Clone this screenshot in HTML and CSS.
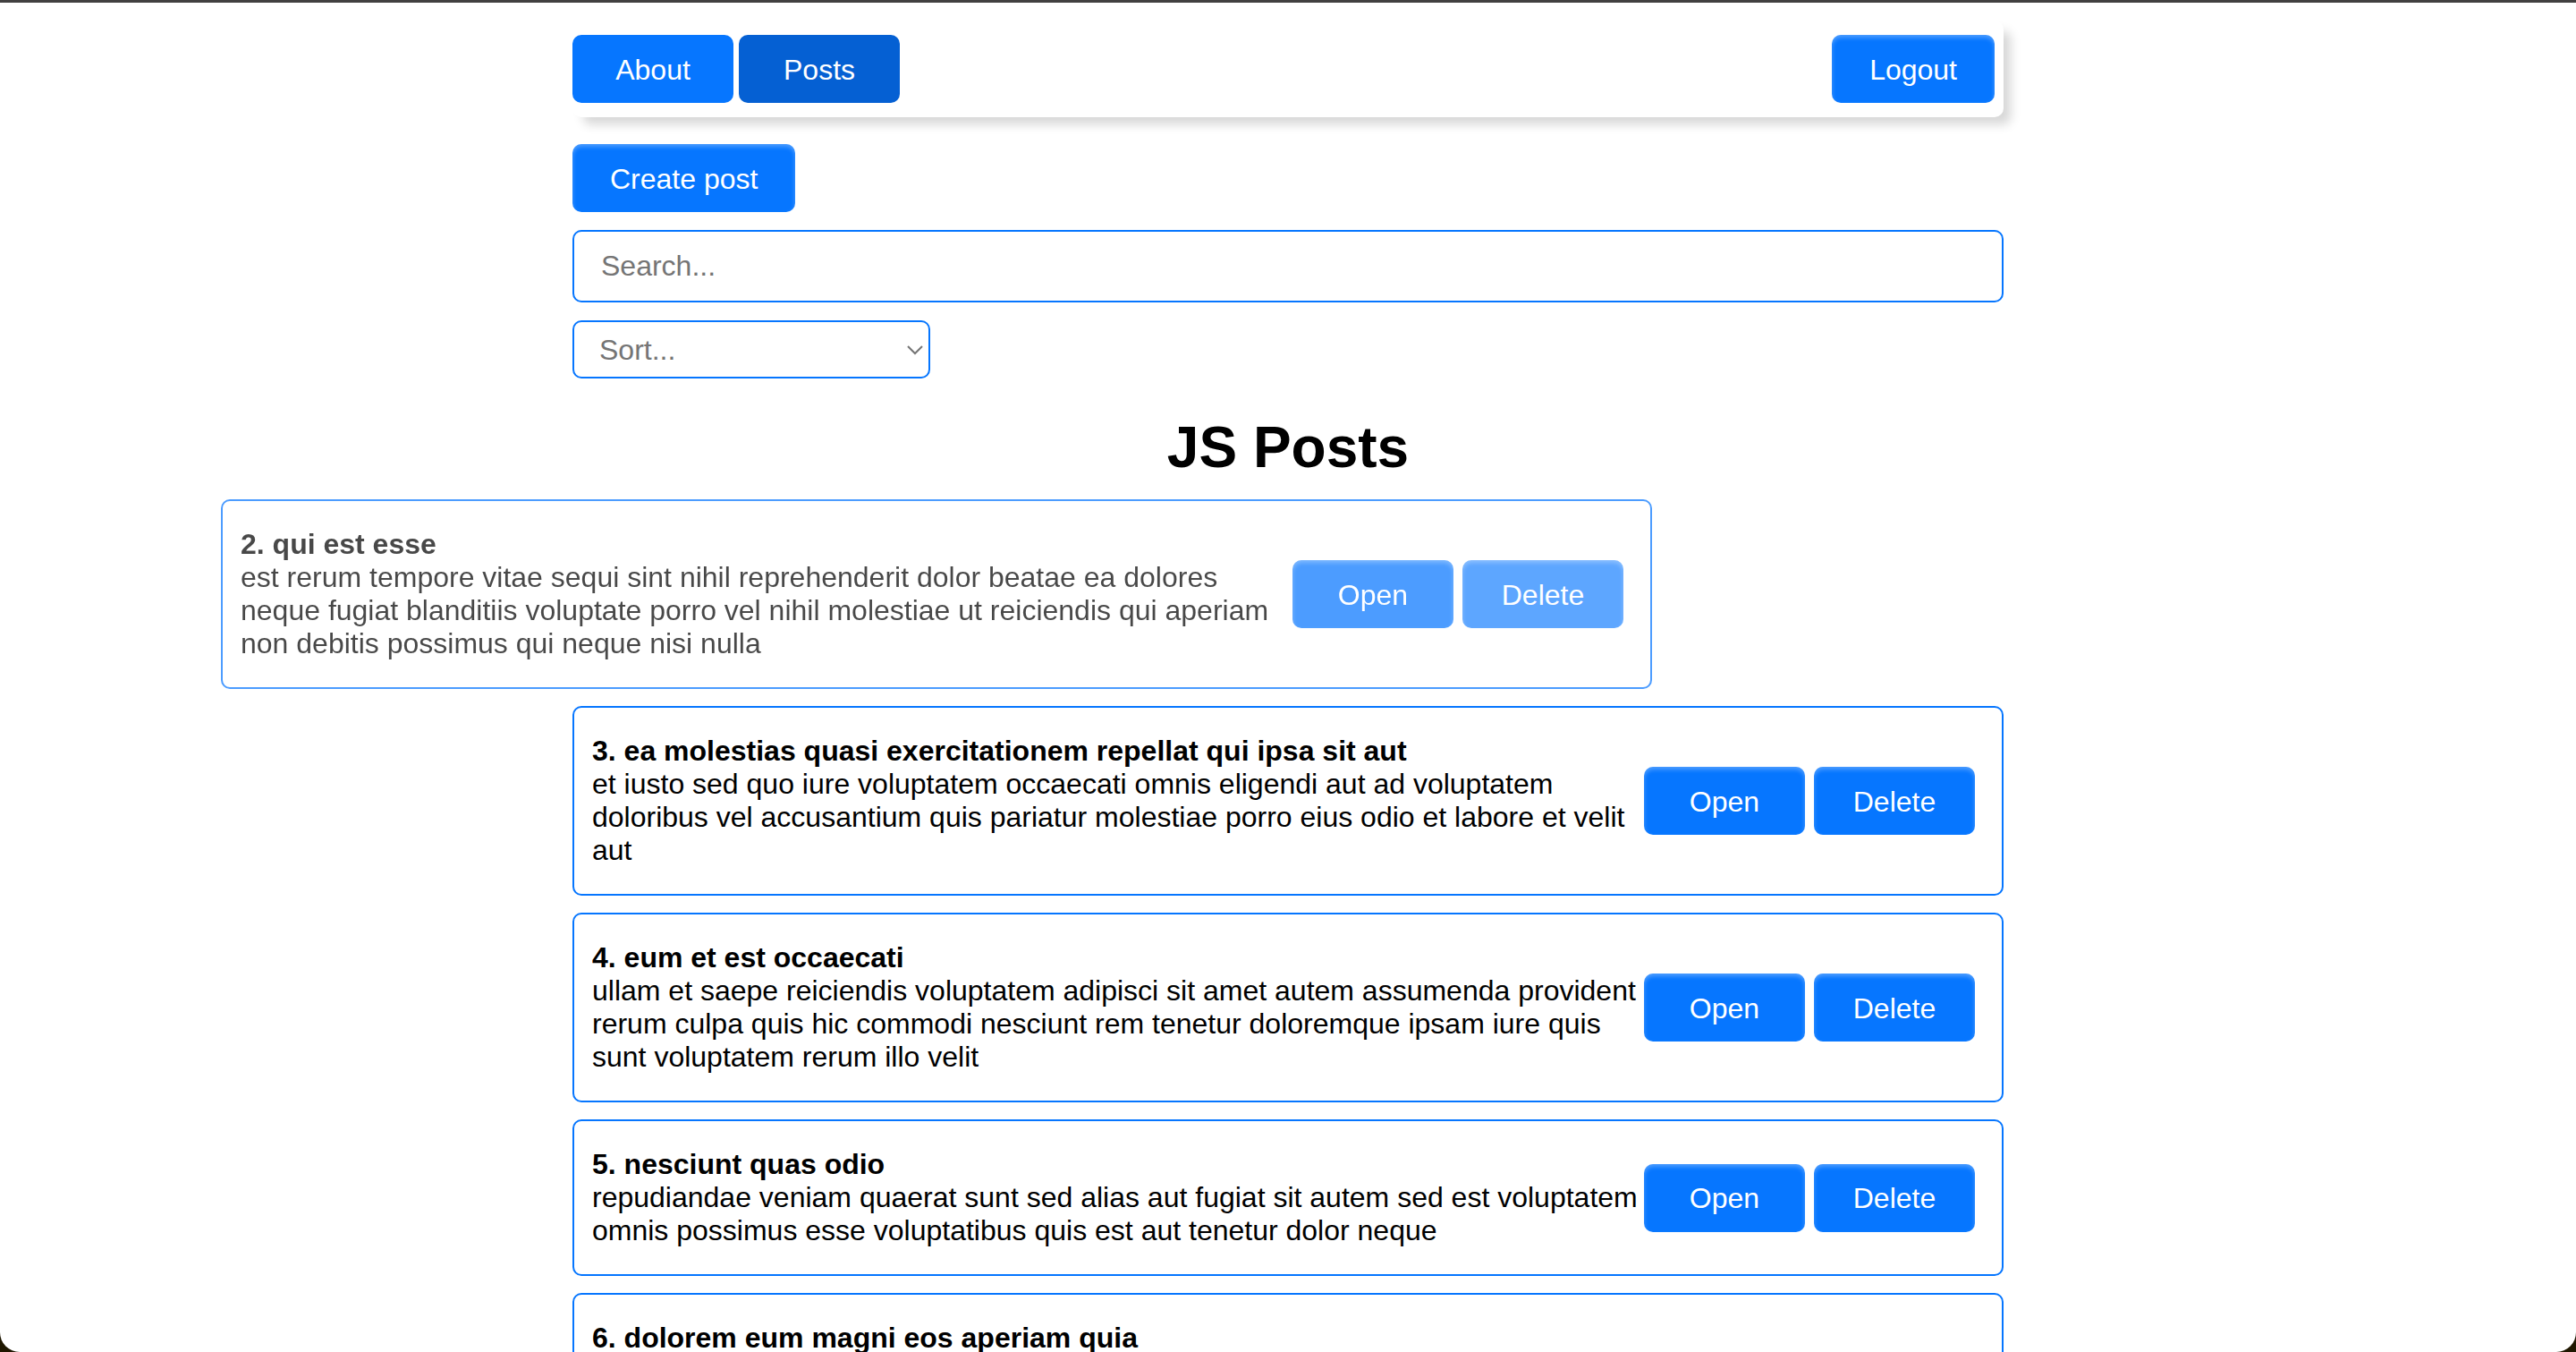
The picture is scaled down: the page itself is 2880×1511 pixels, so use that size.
FILE: index.html
```html
<!DOCTYPE html>
<html lang="en">
<head>
  <meta charset="utf-8">
  <meta name="viewport" content="width=device-width, initial-scale=1">
  <title>JS Posts</title>
  <link rel="stylesheet" href="styles.css">
</head>
<body>
  <div class="window">
    <div class="container">
      <nav class="navbar">
        <a class="btn btn--link" href="#about">About</a>
        <a class="btn btn--link btn--active" href="#posts" aria-current="page">Posts</a>
        <button class="btn navbar__logout" type="button">Logout</button>
      </nav>

      <main class="content">
        <button class="btn btn--create" type="button">Create post</button>
        <input class="field" type="text" placeholder="Search..." aria-label="Search posts">
        <div class="sort">
          <select class="sort__select" aria-label="Sort posts">
            <option value="" selected>Sort...</option>
            <option value="title">By title</option>
            <option value="body">By description</option>
          </select>
          <svg class="sort__arrow" viewBox="0 0 18 11" aria-hidden="true"><path d="M1 1l8 8 8-8"/></svg>
        </div>

        <h1 class="title">JS Posts</h1>

        <section class="posts" aria-label="Posts">
          <article class="post post--leaving">
            <div class="post__text">
              <h2 class="post__title">2. qui est esse</h2>
              <p class="post__body">est rerum tempore vitae sequi sint nihil reprehenderit dolor beatae ea dolores neque fugiat blanditiis voluptate porro vel nihil molestiae ut reiciendis qui aperiam non debitis possimus qui neque nisi nulla</p>
            </div>
            <div class="post__buttons">
              <button class="btn" type="button">Open</button>
              <button class="btn btn--pressed" type="button">Delete</button>
            </div>
          </article>
          <article class="post">
            <div class="post__text">
              <h2 class="post__title">3. ea molestias quasi exercitationem repellat qui ipsa sit aut</h2>
              <p class="post__body">et iusto sed quo iure voluptatem occaecati omnis eligendi aut ad voluptatem doloribus vel accusantium quis pariatur molestiae porro eius odio et labore et velit aut</p>
            </div>
            <div class="post__buttons">
              <button class="btn" type="button">Open</button>
              <button class="btn" type="button">Delete</button>
            </div>
          </article>
          <article class="post">
            <div class="post__text">
              <h2 class="post__title">4. eum et est occaecati</h2>
              <p class="post__body">ullam et saepe reiciendis voluptatem adipisci sit amet autem assumenda provident rerum culpa quis hic commodi nesciunt rem tenetur doloremque ipsam iure quis sunt voluptatem rerum illo velit</p>
            </div>
            <div class="post__buttons">
              <button class="btn" type="button">Open</button>
              <button class="btn" type="button">Delete</button>
            </div>
          </article>
          <article class="post">
            <div class="post__text">
              <h2 class="post__title">5. nesciunt quas odio</h2>
              <p class="post__body">repudiandae veniam quaerat sunt sed alias aut fugiat sit autem sed est voluptatem omnis possimus esse voluptatibus quis est aut tenetur dolor neque</p>
            </div>
            <div class="post__buttons">
              <button class="btn" type="button">Open</button>
              <button class="btn" type="button">Delete</button>
            </div>
          </article>
          <article class="post">
            <div class="post__text">
              <h2 class="post__title">6. dolorem eum magni eos aperiam quia</h2>
            </div>
          </article>
        </section>
      </main>
    </div>
  </div>
</body>
</html>
```
FILE: styles.css
```css
:root {
  --blue: #0676ff;
  --blue-dark: #0560d3;
  --grey: #757575;
}

* {
  box-sizing: border-box;
  margin: 0;
  padding: 0;
}

body {
  background: #1f1700;
  color: #000;
  font-family: "Liberation Sans", Arial, Helvetica, sans-serif;
  font-size: 32px;
  line-height: 37px;
}

.window {
  height: 100vh;
  overflow-x: hidden;
  overflow-y: auto;
  scrollbar-width: none;
  background: #fff;
  border-top: 3px solid #424040;
  border-radius: 0 0 22px 22px;
}

.container {
  width: 100%;
  max-width: 1600px;
  margin: 0 auto;
  padding-top: 20px;
}

.navbar {
  display: flex;
  gap: 6px;
  padding: 16px 10px 16px 0;
  border-radius: 10px;
  background: #fff;
  box-shadow: 10px 10px 12px -2px rgba(0, 0, 0, 0.16);
}

.navbar__logout {
  margin-left: auto;
}

.btn {
  display: flex;
  align-items: center;
  justify-content: center;
  min-width: 180px;
  height: 76px;
  padding: 2px 42px 0;
  border: 0;
  border-radius: 10px;
  background: var(--blue);
  box-shadow: inset 0 3px 5px rgba(255, 255, 255, 0.3);
  color: #fff;
  font: inherit;
  text-decoration: none;
  cursor: pointer;
}

.btn--link {
  box-shadow: none;
}

.btn--active {
  background: var(--blue-dark);
}

.btn--pressed {
  opacity: 0.9;
}

.content {
  display: flex;
  flex-direction: column;
  align-items: flex-start;
  gap: 20px;
  margin-top: 30px;
}

.field {
  width: 100%;
  height: 81px;
  padding: 0 30px;
  border: 2px solid var(--blue);
  border-radius: 10px;
  background: #fff;
  font: inherit;
}

.field::placeholder {
  color: var(--grey);
  opacity: 1;
}

.sort {
  position: relative;
  width: 400px;
  max-width: 100%;
}

.sort__select {
  display: block;
  width: 100%;
  height: 65px;
  padding: 2px 40px 0 28px;
  border: 2px solid var(--blue);
  border-radius: 10px;
  background: #fff;
  color: var(--grey);
  font: inherit;
  appearance: none;
}

.sort__arrow {
  position: absolute;
  top: 28px;
  right: 8px;
  width: 18px;
  height: 11px;
  fill: none;
  stroke: var(--grey);
  stroke-width: 2;
  pointer-events: none;
}

.title {
  align-self: center;
  margin-top: 20px;
  font-size: 64px;
  line-height: 75px;
}

.posts {
  display: flex;
  flex-direction: column;
  gap: 19px;
  width: 100%;
}

.post {
  display: flex;
  align-items: center;
  padding: 30px 30px 30px 20px;
  border: 2px solid var(--blue);
  border-radius: 10px;
}

/* Sliding out to the left while it is being deleted */
.post--leaving {
  opacity: 0.72;
  transform: translateX(-393px);
}

.post__text {
  flex: 1;
}

.post__title {
  font-size: 32px;
}

.post__buttons {
  display: flex;
  flex-shrink: 0;
  gap: 10px;
}
```
